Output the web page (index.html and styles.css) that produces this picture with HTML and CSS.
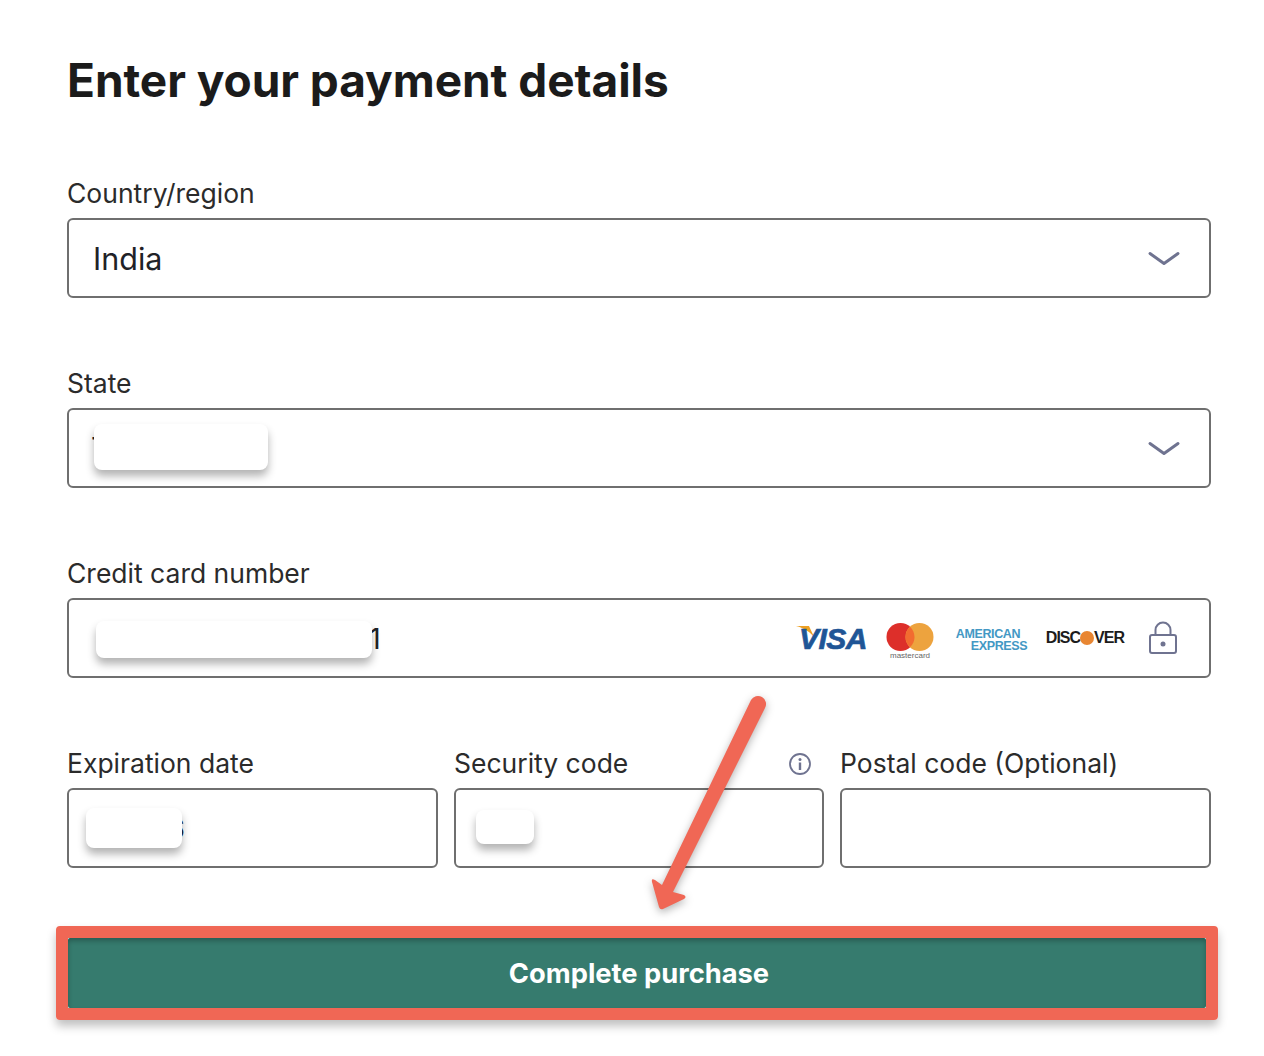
FILE: index.html
```html
<!DOCTYPE html>
<html lang="en">
<head>
    <meta charset="UTF-8">
    <title>Enter your payment details</title>
    <link rel="stylesheet" href="styles.css">
</head>
<body>

<div class="container">
    <h1>Enter your payment details</h1>

    <div class="field">
        <label>Country/region</label>
        <div class="box">
            <span class="value">India</span>
            <svg class="chevron" width="32" height="16" viewBox="0 0 32 16"><path d="M2 2.500 L16 12.500 L30 2.500" fill="none" stroke="#6f7390" stroke-width="3" stroke-linecap="round" stroke-linejoin="round"/></svg>
        </div>
    </div>

    <div class="field">
        <label>State</label>
        <div class="box">
            <span class="value state-letter">T</span>
            <span class="redact redact-state"></span>
            <svg class="chevron" width="32" height="16" viewBox="0 0 32 16"><path d="M2 2.500 L16 12.500 L30 2.500" fill="none" stroke="#6f7390" stroke-width="3" stroke-linecap="round" stroke-linejoin="round"/></svg>
        </div>
    </div>

    <div class="field">
        <label>Credit card number</label>
        <div class="box">
            <span class="value card-digit">1</span>
            <span class="redact redact-card"></span>
            <div class="card-logos">
                <svg class="logo" width="72" height="28" viewBox="0 0 72 28">
                    <path d="M0 2 H13 L19 15 C15 8 8 4 0 2 Z" fill="#eda024"/>
                    <text x="3" y="25" class="visa-text">VISA</text>
                </svg>
                <svg class="logo logo-mc" width="48" height="38" viewBox="0 0 48 38">
                    <circle cx="14.500" cy="14" r="14" fill="#dd2f2a"/>
                    <circle cx="33.500" cy="14" r="14" fill="#eda33e"/>
                    <path d="M24 3.700 A14 14 0 0 1 24 24.300 A14 14 0 0 1 24 3.700 Z" fill="#f26b30"/>
                    <text x="24" y="35" class="mc-text">mastercard</text>
                </svg>
                <div class="amex"><span>AMERICAN</span><span class="amex-two">EXPRESS</span></div>
                <div class="discover">DISC<i class="disc-dot"></i>VER</div>
                <svg class="logo lock" width="30" height="34" viewBox="0 0 30 34">
                    <path d="M7.500 14 V9 A7.500 7.500 0 0 1 22.500 9 V14" fill="none" stroke="#6f7390" stroke-width="2"/>
                    <rect x="2" y="14" width="26" height="18" rx="2" fill="none" stroke="#6f7390" stroke-width="2"/>
                    <circle cx="15" cy="23" r="2.500" fill="#6f7390"/>
                </svg>
            </div>
        </div>
    </div>

    <div class="row">
        <div class="field">
            <label>Expiration date</label>
            <div class="box">
                <span class="value exp-digit">6</span>
                <span class="redact redact-exp"></span>
            </div>
        </div>
        <div class="field">
            <label class="label-info">Security code
                <svg width="24" height="24" viewBox="0 0 24 24"><circle cx="12" cy="12" r="10" fill="none" stroke="#6f7390" stroke-width="1.800"/><circle cx="12" cy="7.500" r="1.500" fill="#6f7390"/><rect x="10.800" y="10.500" width="2.400" height="7.500" fill="#6f7390"/></svg>
            </label>
            <div class="box">
                <span class="redact redact-cvv"></span>
            </div>
        </div>
        <div class="field">
            <label>Postal code (Optional)</label>
            <div class="box"></div>
        </div>
    </div>

    <div class="highlight">
        <button>Complete purchase</button>
    </div>
</div>

<svg class="arrow" width="130" height="230" viewBox="0 0 130 230">
    <path d="M104 8 A8 8 0 0 1 118 16 L26 200 L37 203 Q40 205 37 207 L16 217 Q13 218 12 215 L5 190 Q4 186 8 188 L15 193 Z" fill="#f06755"/>
</svg>

</body>
</html>
```

FILE: styles.css
```css
* {
    margin: 0;
    padding: 0;
    box-sizing: border-box;
}
body {
    position: relative;
    height: 1056px;
    overflow: hidden;
    background: white;
    font-family: Inter, "Liberation Sans", sans-serif;
    color: #1f2227;
}
.container {
    width: 1144px;
    margin-left: 67px;
    padding-top: 52px;
}
h1 {
    font-size: 46px;
    line-height: 56px;
    font-weight: 700;
    color: #1b1b1b;
    letter-spacing: -0.05px;
    margin-bottom: 67px;
}
.field {
    margin-bottom: 67px;
}
label {
    display: block;
    font-size: 26.500px;
    line-height: 36px;
    height: 38px;
    margin-bottom: 5px;
    color: #2b2b2b;
}
.label-info {
    display: flex;
    justify-content: space-between;
    align-items: flex-start;
    padding-right: 12px;
}
.label-info svg {
    margin-top: 7px;
}
.box {
    position: relative;
    display: flex;
    align-items: center;
    height: 80px;
    padding: 0 29px 0 24px;
    border: 2px solid #6f6f6f;
    border-radius: 6px;
}
.value {
    font-size: 30.500px;
}
.state-letter {
    margin-left: -2px;
}
.chevron {
    margin-left: auto;
    margin-top: 2px;
}
.redact {
    position: absolute;
    background: white;
    border-radius: 8px;
    box-shadow: 0 6px 8px rgba(0, 0, 0, 0.3);
}
.redact-state {
    left: 25px;
    top: 14px;
    width: 174px;
    height: 46px;
}
.redact-card {
    left: 27px;
    top: 21px;
    width: 276px;
    height: 37px;
}
.redact-exp {
    left: 17px;
    top: 18px;
    width: 96px;
    height: 40px;
}
.redact-cvv {
    left: 20px;
    top: 20px;
    width: 58px;
    height: 34px;
}
.card-digit {
    margin-left: 276px;
    font-size: 29px;
}
.exp-digit {
    margin-left: 74px;
    font-size: 29px;
}
.card-logos {
    margin-left: auto;
    margin-right: 2px;
    display: flex;
    align-items: center;
}
.logo {
    display: block;
    overflow: visible;
}
.visa-text {
    font: italic 700 30px "Liberation Sans", sans-serif;
    fill: #1f5596;
    stroke: #1f5596;
    stroke-width: 0.700px;
    letter-spacing: -0.5px;
}
.mc-text {
    font: 8px "Liberation Sans", sans-serif;
    fill: #666;
    text-anchor: middle;
}
.logo-mc {
    margin-left: 18px;
    margin-top: 8px;
}
.amex {
    margin-left: 22px;
    margin-top: 3px;
    width: 71px;
    display: flex;
    flex-direction: column;
    font: 700 12.500px/12px "Liberation Sans", sans-serif;
    color: #4398c4;
    letter-spacing: -0.4px;
}
.amex-two {
    margin-left: 15px;
}
.discover {
    margin-left: 19px;
    display: flex;
    align-items: center;
    font: 700 16px "Liberation Sans", sans-serif;
    color: #1c1c1c;
    letter-spacing: -1px;
}
.disc-dot {
    width: 14px;
    height: 14px;
    border-radius: 50%;
    background: #e88632;
}
.lock {
    margin-left: 24px;
}
.row {
    display: grid;
    grid-template-columns: 371px 370px 371px;
    gap: 16px;
}
.row .field {
    margin-bottom: 0;
}
.highlight {
    margin: 58px -7px 0 -11px;
    height: 94px;
    border: 12px solid #f06755;
    border-radius: 4px;
    box-shadow: 0 6px 10px rgba(0, 0, 0, 0.25);
}
button {
    display: block;
    width: 100%;
    height: 100%;
    padding-left: 4px;
    border: none;
    border-radius: 2px;
    background: #367b6e;
    color: white;
    font-family: Inter, "Liberation Sans", sans-serif;
    font-size: 27.300px;
    font-weight: 700;
    box-shadow: inset 0 3px 5px rgba(0, 0, 0, 0.25);
}
.arrow {
    position: absolute;
    left: 647px;
    top: 692px;
    filter: drop-shadow(0 3px 4px rgba(0, 0, 0, 0.3));
}
```
